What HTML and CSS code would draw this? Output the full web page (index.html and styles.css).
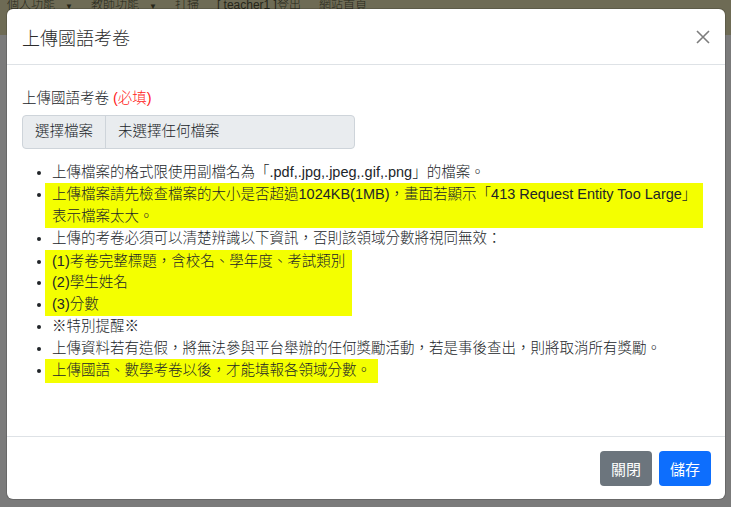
FILE: index.html
```html
<!DOCTYPE html>
<html lang="zh-Hant">

<head>
    <meta charset="UTF-8">
    <meta name="viewport" content="width=device-width, initial-scale=1.0">
    <title>上傳國語考卷</title>
    <link rel="stylesheet" href="styles.css">
</head>

<body>

    <div class="page">
        <div class="navbar">
            <div class="nav-items">
                <span class="nav-item">個人功能<span class="caret">▼</span></span>
                <span class="nav-item">教師功能<span class="caret">▼</span></span>
                <span class="nav-item">打掃</span>
                <span class="nav-item">[ teacher1 ]登出</span>
                <span class="nav-item">網站首頁</span>
            </div>
        </div>
        <div class="page-body"></div>
    </div>

    <div class="modal">
        <div class="modal-header">
            <h5 class="modal-title">上傳國語考卷</h5>
            <button class="btn-close" type="button" aria-label="Close">
                <svg width="14" height="14" viewBox="0 0 14 14">
                    <path d="M1 1L13 13M13 1L1 13" stroke="currentColor" stroke-width="1.6" fill="none" />
                </svg>
            </button>
        </div>

        <div class="modal-body">
            <label class="form-label">上傳國語考卷 <span class="required">(必填)</span></label>
            <div class="file-input">
                <span class="file-btn">選擇檔案</span>
                <span class="file-name">未選擇任何檔案</span>
            </div>

            <ul class="notes">
                <li>上傳檔案的格式限使用副檔名為「.pdf,.jpg,.jpeg,.gif,.png」的檔案。</li>
                <li><span class="mark nowrap">上傳檔案請先檢查檔案的大小是否超過1024KB(1MB)，畫面若顯示「413 Request Entity Too Large」<br>表示檔案太大。</span></li>
                <li>上傳的考卷必須可以清楚辨識以下資訊，否則該領域分數將視同無效：</li>
                <li class="group">
                    <ul class="mark">
                        <li>(1)考卷完整標題，含校名、學年度、考試類別</li>
                        <li>(2)學生姓名</li>
                        <li>(3)分數</li>
                    </ul>
                </li>
                <li>※特別提醒※</li>
                <li>上傳資料若有造假，將無法參與平台舉辦的任何獎勵活動，若是事後查出，則將取消所有獎勵。</li>
                <li><span class="mark">上傳國語、數學考卷以後，才能填報各領域分數。</span></li>
            </ul>
        </div>

        <div class="modal-footer">
            <button class="btn btn-secondary" type="button">關閉</button>
            <button class="btn btn-primary" type="button">儲存</button>
        </div>
    </div>

</body>

</html>
```

FILE: styles.css
```css
body {
    margin: 0;
    overflow: hidden;
    height: 100vh;
    background-color: #7a7a7a;
    font-family: "Liberation Sans", "Noto Sans CJK TC", sans-serif;
    font-weight: 300;
    color: #212529;
}

.page {
    height: 100%;
}

.navbar {
    height: 35px;
    background-color: #6e6b55;
    overflow: hidden;
}

.nav-items {
    display: flex;
    gap: 18px;
    padding-left: 7px;
    font-size: 12px;
    line-height: 16px;
    color: #262619;
    transform: translateY(-3px);
}

.caret {
    margin-left: 10px;
    font-size: 8px;
}

.page-body {
    height: calc(100% - 35px);
    background-color: #7b7b7b;
}

.modal {
    position: absolute;
    left: 7px;
    top: 9px;
    width: 718px;
    display: flex;
    flex-direction: column;
    background: #ffffff;
    border-radius: 6px;
    box-shadow: 0 0 0 1px rgba(0, 0, 0, 0.15);
}

.modal-header {
    display: flex;
    align-items: center;
    justify-content: space-between;
    height: 56px;
    padding: 0 15px;
    box-sizing: border-box;
    border-bottom: 1px solid #dee2e6;
}

.modal-title {
    margin: 0;
    font-size: 18px;
    font-weight: 300;
    color: #2b2b2b;
}

.btn-close {
    display: flex;
    padding: 0;
    border: none;
    background: none;
    color: #7d7d7d;
    cursor: pointer;
}

.modal-body {
    height: 371px;
    padding: 23px 15px 0;
    box-sizing: border-box;
    font-size: 14.5px;
    line-height: 21.5px;
}

.form-label {
    display: block;
    margin-bottom: 5px;
}

.required {
    color: #ff1a1a;
}

.file-input {
    display: flex;
    width: 333px;
    height: 34px;
    box-sizing: border-box;
    border: 1px solid #ced4da;
    border-radius: 4px;
    background: #e9ecef;
    overflow: hidden;
}

.file-btn {
    display: flex;
    align-items: center;
    padding: 0 12px;
    border-right: 1px solid #ced4da;
}

.file-name {
    display: flex;
    align-items: center;
    padding: 0 12px;
}

.notes {
    margin: 13px 0 0;
    padding-left: 30px;
}

.notes li {
    list-style-type: disc;
}

.mark {
    display: block;
    width: fit-content;
    margin-left: -7px;
    padding: 1px 7px;
    background: #f4ff00;
}

.nowrap {
    white-space: nowrap;
}

.group {
    list-style: none !important;
}

ul.mark {
    margin-top: 0;
    margin-bottom: 0;
    padding-left: 7px;
}

.modal-footer {
    display: flex;
    justify-content: flex-end;
    gap: 7px;
    padding: 14px 14px 13px;
    border-top: 1px solid #dee2e6;
}

.btn {
    height: 35px;
    padding: 0 11px;
    border: none;
    border-radius: 4px;
    font-family: inherit;
    font-size: 15px;
    font-weight: 400;
    color: #ffffff;
    cursor: pointer;
}

.btn-secondary {
    background: #6c757d;
}

.btn-primary {
    background: #0d6efd;
}
```
